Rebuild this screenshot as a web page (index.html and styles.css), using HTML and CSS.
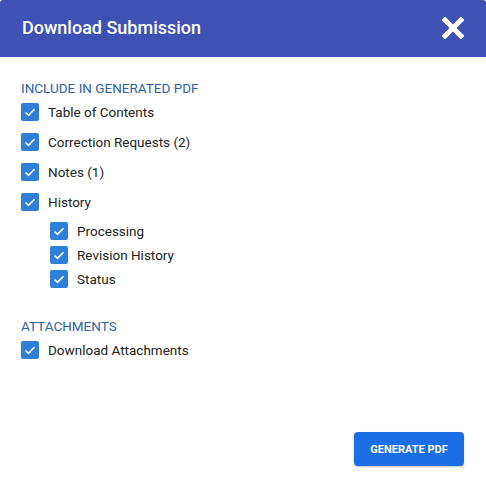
FILE: index.html
```html
<!DOCTYPE html>
<html lang="en">

<head>
  <meta charset="utf-8">
  <title>Download Submission</title>
  <link rel="stylesheet" href="styles.css">
</head>

<body>
  <div class="dialog">
    <!-- header -->
    <div class="header">
      <span class="title">Download Submission</span>
      <svg class="close" width="22" height="22" viewBox="0 0 22 22">
        <path d="M3 3 L19 19 M19 3 L3 19" stroke="#fff" stroke-width="5" stroke-linecap="square" fill="none"/>
      </svg>
    </div>

    <div class="content">
      <div class="label">Include in generated PDF</div>
      <div class="row"><span class="box"></span>Table of Contents</div>
      <div class="row"><span class="box"></span>Correction Requests (2)</div>
      <div class="row"><span class="box"></span>Notes (1)</div>
      <div class="row"><span class="box"></span>History</div>
      <div class="sub">
        <div class="row small"><span class="box"></span>Processing</div>
        <div class="row small"><span class="box"></span>Revision History</div>
        <div class="row small"><span class="box"></span>Status</div>
      </div>

      <div class="label second">Attachments</div>
      <div class="row"><span class="box"></span>Download Attachments</div>
    </div>

    <div class="footer">
      <button class="button">GENERATE PDF</button>
    </div>
  </div>
</body>

</html>
```

FILE: styles.css
```css
body {
  margin: 0;
  background: #fff;
  font-family: Roboto, "Liberation Sans", sans-serif;
}

.dialog {
  width: 486px;
  height: 481px;
  display: flex;
  flex-direction: column;
}

.header {
  height: 54px;
  background-color: #3f51b5;
  border-radius: 3px 3px 0 0;
  display: flex;
  align-items: center;
  justify-content: space-between;
  padding: 0 22px 3px 22px;
}

.title {
  color: #fff;
  font-size: 18px;
  font-weight: 500;
}

.close {
  margin-top: 2px;
}

.content {
  flex: 1;
  padding: 23px 21px 0 21px;
}

.label {
  color: #2d63a6;
  font-size: 13.5px;
  text-transform: uppercase;
  height: 17px;
  line-height: 17px;
}

.label.second {
  margin-top: 27px;
}

.row {
  display: flex;
  align-items: center;
  height: 30px;
  font-size: 13.5px;
  color: #222;
}

.row.small {
  height: 24px;
}

.sub {
  padding-left: 29px;
  margin-top: 2px;
}

.box {
  width: 18px;
  height: 18px;
  border-radius: 2px;
  background-color: #2f7fd9;
  margin-right: 9px;
  background-image: url("data:image/svg+xml,%3Csvg xmlns='http://www.w3.org/2000/svg' width='18' height='18'%3E%3Cpath d='M4.5 9.5 L7.5 12.3 L13.5 6.3' stroke='white' stroke-width='1.6' fill='none'/%3E%3C/svg%3E");
}

.footer {
  display: flex;
  justify-content: flex-end;
  padding: 0 22px 15px 0;
}

.button {
  width: 110px;
  height: 34px;
  border: none;
  border-radius: 4px;
  background-color: #1a6fe6;
  color: #fff;
  font-family: Roboto, sans-serif;
  font-weight: bold;
  font-size: 11px;
  box-shadow: 0 1px 2px rgba(0,0,0,0.25);
}
```
